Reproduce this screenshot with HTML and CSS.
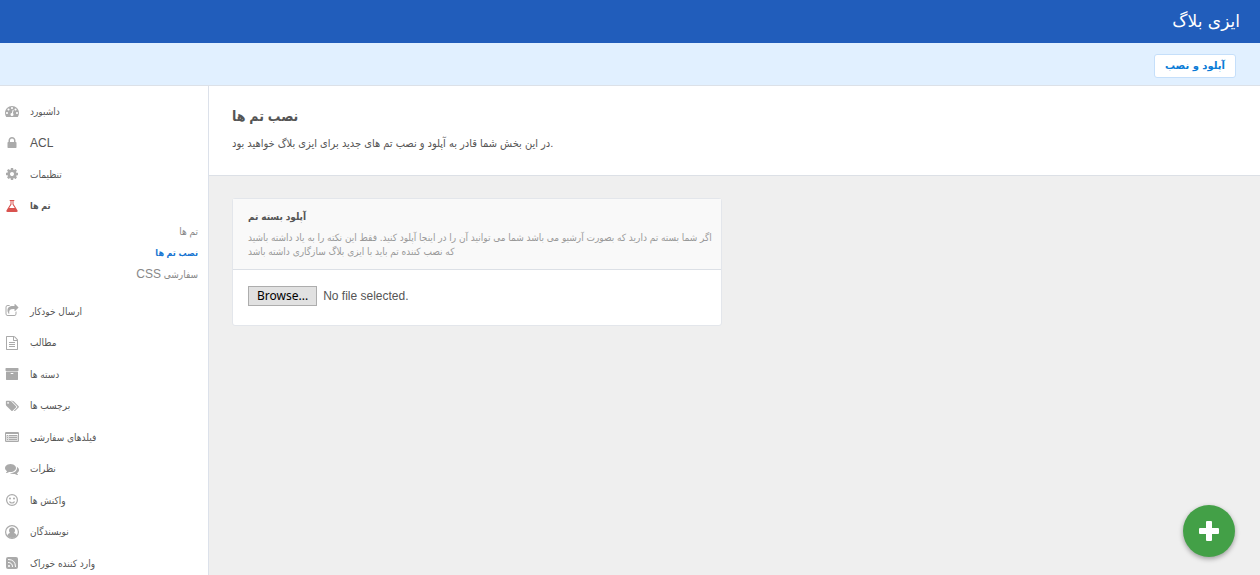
FILE: index.html
```html
<!DOCTYPE html>
<html lang="fa">
<head>
  <meta charset="UTF-8">
  <title>ایزی بلاگ</title>
  <link rel="stylesheet" href="styles.css">
</head>
<body>

  <header class="topbar">
    <a href="#" class="brand">ایزی بلاگ</a>
  </header>

  <div class="toolbar">
    <button type="button" class="btn-install">آپلود و نصب</button>
  </div>

  <div class="layout">
    <!-- Sidebar -->
    <nav class="sidebar">
      <ul class="menu">
        <li>
          <a href="#"><svg class="icon" viewBox="0 0 1792 1792"><path d="M384 1152q0-53-37.5-90.5t-90.5-37.5-90.5 37.5-37.5 90.5 37.5 90.5 90.5 37.5 90.5-37.5 37.5-90.5zm192-448q0-53-37.5-90.5t-90.5-37.5-90.5 37.5-37.5 90.5 37.5 90.5 90.5 37.5 90.5-37.5 37.5-90.5zm428 481l101-382q6-26-7.5-48.5t-38.5-29.5-48 6.5-30 39.5l-101 382q-60 5-107 43.5t-63 98.5q-20 77 20 146t117 89 146-20 89-117q16-60-6-117t-72-91zm660-33q0-53-37.5-90.5t-90.5-37.5-90.5 37.5-37.5 90.5 37.5 90.5 90.5 37.5 90.5-37.5 37.5-90.5zm-640-640q0-53-37.5-90.5t-90.5-37.5-90.5 37.5-37.5 90.5 37.5 90.5 90.5 37.5 90.5-37.5 37.5-90.5zm448 192q0-53-37.5-90.5t-90.5-37.5-90.5 37.5-37.5 90.5 37.5 90.5 90.5 37.5 90.5-37.5 37.5-90.5zm320 448q0 261-141 483-19 29-54 29h-1402q-35 0-54-29-141-221-141-483 0-182 71-348t191-286 286-191 348-71 348 71 286 191 191 286 71 348z"/></svg><span>داشبورد</span></a>
        </li>
        <li>
          <a href="#"><svg class="icon" viewBox="0 0 1792 1792"><path d="M640 768h512v-192q0-106-75-181t-181-75-181 75-75 181v192zm832 96v576q0 40-28 68t-68 28h-960q-40 0-68-28t-28-68v-576q0-40 28-68t68-28h32v-192q0-184 132-316t316-132 316 132 132 316v192h32q40 0 68 28t28 68z"/></svg><span class="latin">ACL</span></a>
        </li>
        <li>
          <a href="#"><svg class="icon" viewBox="0 0 1792 1792"><path d="M1152 896q0-106-75-181t-181-75-181 75-75 181 75 181 181 75 181-75 75-181zm512-109v222q0 12-8 23t-20 13l-185 28q-19 54-39 91 35 50 107 138 10 12 10 25t-9 23q-27 37-99 108t-94 71q-12 0-26-9l-138-108q-44 23-91 38-16 136-29 186-7 28-36 28h-222q-14 0-24.5-8.5t-11.5-21.5l-28-184q-49-16-90-37l-141 107q-10 9-25 9-14 0-25-11-126-114-165-168-7-10-7-23 0-12 8-23 15-21 51-66.5t54-70.5q-27-50-41-99l-183-27q-13-2-21-12.5t-8-23.5v-222q0-12 8-23t19-13l186-28q14-46 39-92-40-57-107-138-10-12-10-24 0-10 9-23 26-36 98.5-107.5t94.5-71.5q13 0 26 10l138 107q44-23 91-38 16-136 29-186 7-28 36-28h222q14 0 24.5 8.5t11.5 21.5l28 184q49 16 90 37l142-107q9-9 24-9 13 0 25 10 129 119 165 170 7 8 7 22 0 12-8 23-15 21-51 66.5t-54 70.5q26 50 41 98l183 28q13 2 21 12.5t8 23.5z"/></svg><span>تنظیمات</span></a>
        </li>
        <li class="active">
          <a href="#"><svg class="icon" viewBox="0 0 1792 1792"><path d="M1591 1448q56 89 21.5 152.5t-140.5 63.5h-1152q-106 0-140.5-63.5t21.5-152.5l503-793v-399h-64q-26 0-45-19t-19-45 19-45 45-19h512q26 0 45 19t19 45-19 45-45 19h-64v399zm-779-725l-272 429h712l-272-429-20-31v-436h-128v436z"/></svg><span>تم ها</span></a>
          <ul class="submenu">
            <li><a href="#">تم ها</a></li>
            <li><a href="#" class="current">نصب تم ها</a></li>
            <li><a href="#"><span class="latin">CSS</span> سفارشی</a></li>
          </ul>
        </li>
        <li>
          <a href="#"><svg class="icon" viewBox="0 0 1792 1792"><path d="M1472 989v259q0 119-84.5 203.5t-203.5 84.5h-832q-119 0-203.5-84.5t-84.5-203.5v-832q0-119 84.5-203.5t203.5-84.5h255q13 0 22.5 9.5t9.5 22.5q0 27-26 32-77 26-133 60-10 4-16 4h-112q-66 0-113 47t-47 113v832q0 66 47 113t113 47h832q66 0 113-47t47-113v-214q0-19 18-29 28-13 54-37 16-16 35-8 21 9 21 29zm237-496l-384 384q-18 19-45 19-12 0-25-5-39-17-39-59v-192h-160q-323 0-438 131-119 137-74 473 3 23-20 34-8 2-12 2-16 0-26-13-10-14-21-31t-39.5-68.5-49.5-99.5-38.5-114-17.5-122q0-49 3.500-91t14-90 28-88 47-81.500 68.500-74 94.500-61.500 124.500-48.500 159.500-30.500 196.500-11h160v-192q0-42 39-59 13-5 25-5 26 0 45 19l384 384q19 19 19 45t-19 45z"/></svg><span>ارسال خودکار</span></a>
        </li>
        <li>
          <a href="#"><svg class="icon" viewBox="0 0 1792 1792"><path d="M1596 380q28 28 48 76t20 88v1152q0 40-28 68t-68 28h-1344q-40 0-68-28t-28-68v-1600q0-40 28-68t68-28h896q40 0 88 20t76 48zm-444-244v376h376q-10-29-22-41l-313-313q-12-12-41-22zm384 1528v-1024h-416q-40 0-68-28t-28-68v-416h-768v1536h1280zm-1024-864q0-14 9-23t23-9h704q14 0 23 9t9 23v64q0 14-9 23t-23 9h-704q-14 0-23-9t-9-23v-64zm736 224q14 0 23 9t9 23v64q0 14-9 23t-23 9h-704q-14 0-23-9t-9-23v-64q0-14 9-23t23-9h704zm0 256q14 0 23 9t9 23v64q0 14-9 23t-23 9h-704q-14 0-23-9t-9-23v-64q0-14 9-23t23-9h704z"/></svg><span>مطالب</span></a>
        </li>
        <li>
          <a href="#"><svg class="icon" viewBox="0 0 1792 1792"><path d="M1088 832q0-26-19-45t-45-19h-256q-26 0-45 19t-19 45 19 45 45 19h256q26 0 45-19t19-45zm576-192v960q0 26-19 45t-45 19h-1408q-26 0-45-19t-19-45v-960q0-26 19-45t45-19h1408q26 0 45 19t19 45zm64-448v256q0 26-19 45t-45 19h-1536q-26 0-45-19t-19-45v-256q0-26 19-45t45-19h1536q26 0 45 19t19 45z"/></svg><span>دسته ها</span></a>
        </li>
        <li>
          <a href="#"><svg class="icon" viewBox="0 0 2048 1792"><path d="M576 448q0-53-37.5-90.5t-90.5-37.5-90.5 37.5-37.5 90.5 37.5 90.5 90.5 37.5 90.5-37.5 37.5-90.5zm1067 576q0 53-37 90l-491 492q-39 37-91 37-53 0-90-37l-715-716q-38-37-64.5-101t-26.5-117v-416q0-52 38-90t90-38h416q53 0 117 26.5t102 64.5l715 714q37 39 37 91zm384 0q0 53-37 90l-491 492q-39 37-91 37-36 0-59-14t-53-45l470-470q37-37 37-90 0-52-37-91l-715-714q-38-38-102-64.5t-117-26.5h224q53 0 117 26.5t102 64.5l715 714q37 39 37 91z"/></svg><span>برچسب ها</span></a>
        </li>
        <li>
          <a href="#"><svg class="icon" viewBox="0 0 14 14"><path class="pale" d="M1 5h12v6h-12z"/><path fill-rule="evenodd" d="M1.200 2h11.600q1.200 0 1.200 1.200v7.600q0 1.200-1.200 1.200h-11.600q-1.200 0-1.200-1.200v-7.600q0-1.200 1.200-1.200zM1 4v6.700q0 .3.300.3h11.400q.3 0 .3-.3v-6.700z"/><path d="M2 5h1v1h-1zM2 7h1v1h-1zM2 9h1v1h-1zM4 5h8v1h-8zM4 7h8v1h-8zM4 9h8v1h-8z"/></svg><span>فیلدهای سفارشی</span></a>
        </li>
        <li>
          <a href="#"><svg class="icon" viewBox="0 0 1792 1792"><path d="M1408 768q0 139-94 257t-256.500 186.500-353.500 68.500q-86 0-176-16-124 88-278 128-36 9-86 16h-3q-11 0-20.500-8t-11.500-21q-1-3-1-6.500t.5-6.500 2-6l2.500-5 3.500-5.500 4-5 4.500-5 4-4.500q5-6 23-25t26-29.500 22.500-29 25-38.500 20.500-44q-124-72-195-177t-71-224q0-139 94-257t256.500-186.500 353.500-68.500 353.500 68.500 256.500 186.500 94 257zm384 256q0 120-71 224.500t-195 176.500q10 24 20.500 44t25 38.500 22.500 29 26 29.500 23 25q1 1 4 4.500t4.500 5 4 5 3.500 5.500l2.500 5 2 6 .5 6.500-1 6.500q-3 14-13 22t-22 7q-50-7-86-16-154-40-278-128-90 16-176 16-271 0-472-132 58 4 88 4 161 0 309-45t264-129q125-92 192-212t67-254q0-77-23-152 129 71 204 178t75 230z"/></svg><span>نظرات</span></a>
        </li>
        <li>
          <a href="#"><svg class="icon" viewBox="0 0 14 14"><circle class="line" cx="7" cy="7" r="5.400"/><path class="line" d="M4.500 8.500q.7 1.500 2.500 1.500t2.500-1.500"/><circle cx="5" cy="5.500" r="1"/><circle cx="9" cy="5.500" r="1"/></svg><span>واکنش ها</span></a>
        </li>
        <li>
          <a href="#"><svg class="icon" viewBox="0 0 14 14"><circle class="line" cx="7" cy="7" r="6.400"/><path d="M7 2.500c1.700 0 3 1.300 3 3 0 1-.4 1.900-1.100 2.500 1.600.2 2.500 1.400 2.700 2.900Q9.800 13 7 13t-4.600-2.100c.2-1.500 1.100-2.700 2.700-2.900C4.400 7.400 4 6.500 4 5.500c0-1.700 1.300-3 3-3z"/></svg><span>نویسندگان</span></a>
        </li>
        <li>
          <a href="#"><svg class="icon" viewBox="0 0 14 14"><rect x="1" y="1" width="12" height="12" rx="2"/><circle class="cut" cx="4" cy="10" r="1"/><path class="cut-line" d="M3 6.500q4.500 0 4.500 4.500M3 3.500q7.500 0 7.500 7.500"/></svg><span>وارد کننده خوراک</span></a>
        </li>
      </ul>
    </nav>

    <main class="content">
      <div class="page-head">
        <h1>نصب تم ها</h1>
        <p>در این بخش شما قادر به آپلود و نصب تم های جدید برای ایزی بلاگ خواهید بود.</p>
      </div>

      <!-- Upload form -->
      <form class="card">
        <div class="card-head">
          <h2>آپلود بسته تم</h2>
          <p>اگر شما بسته تم دارید که بصورت آرشیو می باشد شما می توانید آن را در اینجا آپلود کنید. فقط این نکته را به یاد داشته باشید<br>که نصب کننده تم باید با ایزی بلاگ سازگاری داشته باشد</p>
        </div>
        <div class="card-body">
          <input type="file" id="package" class="file-input">
          <label for="package" class="file-label">
            <span class="file-btn">Browse...</span>
            <span class="file-name">No file selected.</span>
          </label>
        </div>
      </form>
    </main>
  </div>

  <button type="button" class="fab" aria-label="افزودن">
    <svg viewBox="0 0 20 20"><path d="M8 0h4q1 0 1 1v6h6q1 0 1 1v4q0 1-1 1h-6v6q0 1-1 1h-4q-1 0-1-1v-6h-6q-1 0-1-1v-4q0-1 1-1h6v-6q0-1 1-1z"/></svg>
  </button>

</body>
</html>
```
FILE: styles.css
```css
* {
  box-sizing: border-box;
}

body {
  margin: 0;
  height: 100vh;
  display: flex;
  flex-direction: column;
  overflow: hidden;
  background: #efefef;
  color: #555;
  font-family: "Liberation Sans", "DejaVu Sans Condensed", "DejaVu Sans", sans-serif;
  font-size: 12px;
}

a {
  color: inherit;
  text-decoration: none;
}

ul {
  list-style: none;
  margin: 0;
  padding: 0;
}

h1, h2, p {
  margin: 0;
}

.topbar {
  flex: none;
  height: 43px;
  padding: 0 20px 2px;
  display: flex;
  align-items: center;
  justify-content: flex-end;
  background: #215dbb;
  color: #fff;
}

.brand {
  font-family: "DejaVu Sans", sans-serif;
  font-size: 17px;
  line-height: 20px;
}

.toolbar {
  flex: none;
  height: 43px;
  padding: 3px 24px 0;
  display: flex;
  align-items: center;
  justify-content: flex-end;
  background: #e1f0ff;
  border-bottom: 1px solid #dce1e8;
}

.btn-install {
  height: 24px;
  padding: 0 10px;
  background: #fff;
  border: 1px solid #c5dffa;
  border-radius: 3px;
  color: #0a7bd6;
  font-family: "DejaVu Sans", sans-serif;
  font-size: 10px;
  font-weight: bold;
}

.layout {
  flex: 1;
  min-height: 0;
  display: flex;
}

/* sidebar */
.sidebar {
  flex: none;
  width: 209px;
  padding-top: 9px;
  overflow: hidden;
  background: #fff;
  border-right: 1px solid #dce1ea;
}

.menu {
  font-size: 10px;
}

.menu > li > a {
  display: flex;
  align-items: center;
  gap: 11px;
  height: 32px;
  padding-left: 5px;
}

.menu > li:nth-child(even) > a {
  height: 31px;
}

.latin {
  font-size: 12px;
}

.icon {
  width: 14px;
  height: 14px;
  fill: #aaa;
}

.line {
  fill: none;
  stroke: #aaa;
  stroke-width: 1.2;
}

.pale {
  fill: #ddd;
}

.cut {
  fill: #fff;
}

.cut-line {
  fill: none;
  stroke: #fff;
}

.active > a {
  font-size: 9px;
  font-weight: bold;
}

.active .icon {
  fill: #d9534f;
}

.submenu {
  padding: 0 10px 11px 0;
  color: #888;
  text-align: right;
}

.submenu a {
  display: block;
  height: 21px;
  line-height: 22px;
}

.submenu .current {
  color: #1976d2;
  font-size: 9px;
  font-weight: bold;
}

/* content */
.content {
  flex: 1;
}

.page-head {
  height: 90px;
  padding: 20px 23px;
  background: #fff;
  border-bottom: 1px solid #dce0e6;
}

.page-head h1 {
  margin-bottom: 8px;
  font-size: 14px;
  line-height: 20px;
}

.page-head p {
  font-size: 11px;
  line-height: 18px;
}

.card {
  max-width: 490px;
  margin: 22px 23px;
  background: #fff;
  border: 1px solid #e3e6eb;
  border-radius: 3px;
}

.card-head {
  padding: 10px 8px 10px 15px;
  background: #f9f9f9;
  border-bottom: 1px solid #dce0e6;
}

.card-head h2 {
  margin-bottom: 6px;
  font-size: 10px;
  line-height: 16px;
}

.card-head p {
  color: #999;
  font-size: 10px;
  line-height: 14px;
}

.card-body {
  padding: 16px 15px 19px;
}

.file-input {
  position: absolute;
  width: 1px;
  height: 1px;
  opacity: 0;
}

.file-label {
  display: flex;
  align-items: center;
  gap: 6px;
}

.file-btn {
  padding: 0 8px;
  background: #e1e1e1;
  border: 1px solid #adadad;
  color: #000;
  font-family: "Noto Sans", sans-serif;
  line-height: 18px;
}

.fab {
  position: fixed;
  right: 25px;
  bottom: 18px;
  width: 52px;
  height: 52px;
  padding: 0;
  display: flex;
  align-items: center;
  justify-content: center;
  background: #43a047;
  border: none;
  border-radius: 50%;
  box-shadow: 0 2px 5px rgba(0, 0, 0, 0.35);
}

.fab svg {
  width: 20px;
  height: 20px;
  fill: #fff;
}
```
